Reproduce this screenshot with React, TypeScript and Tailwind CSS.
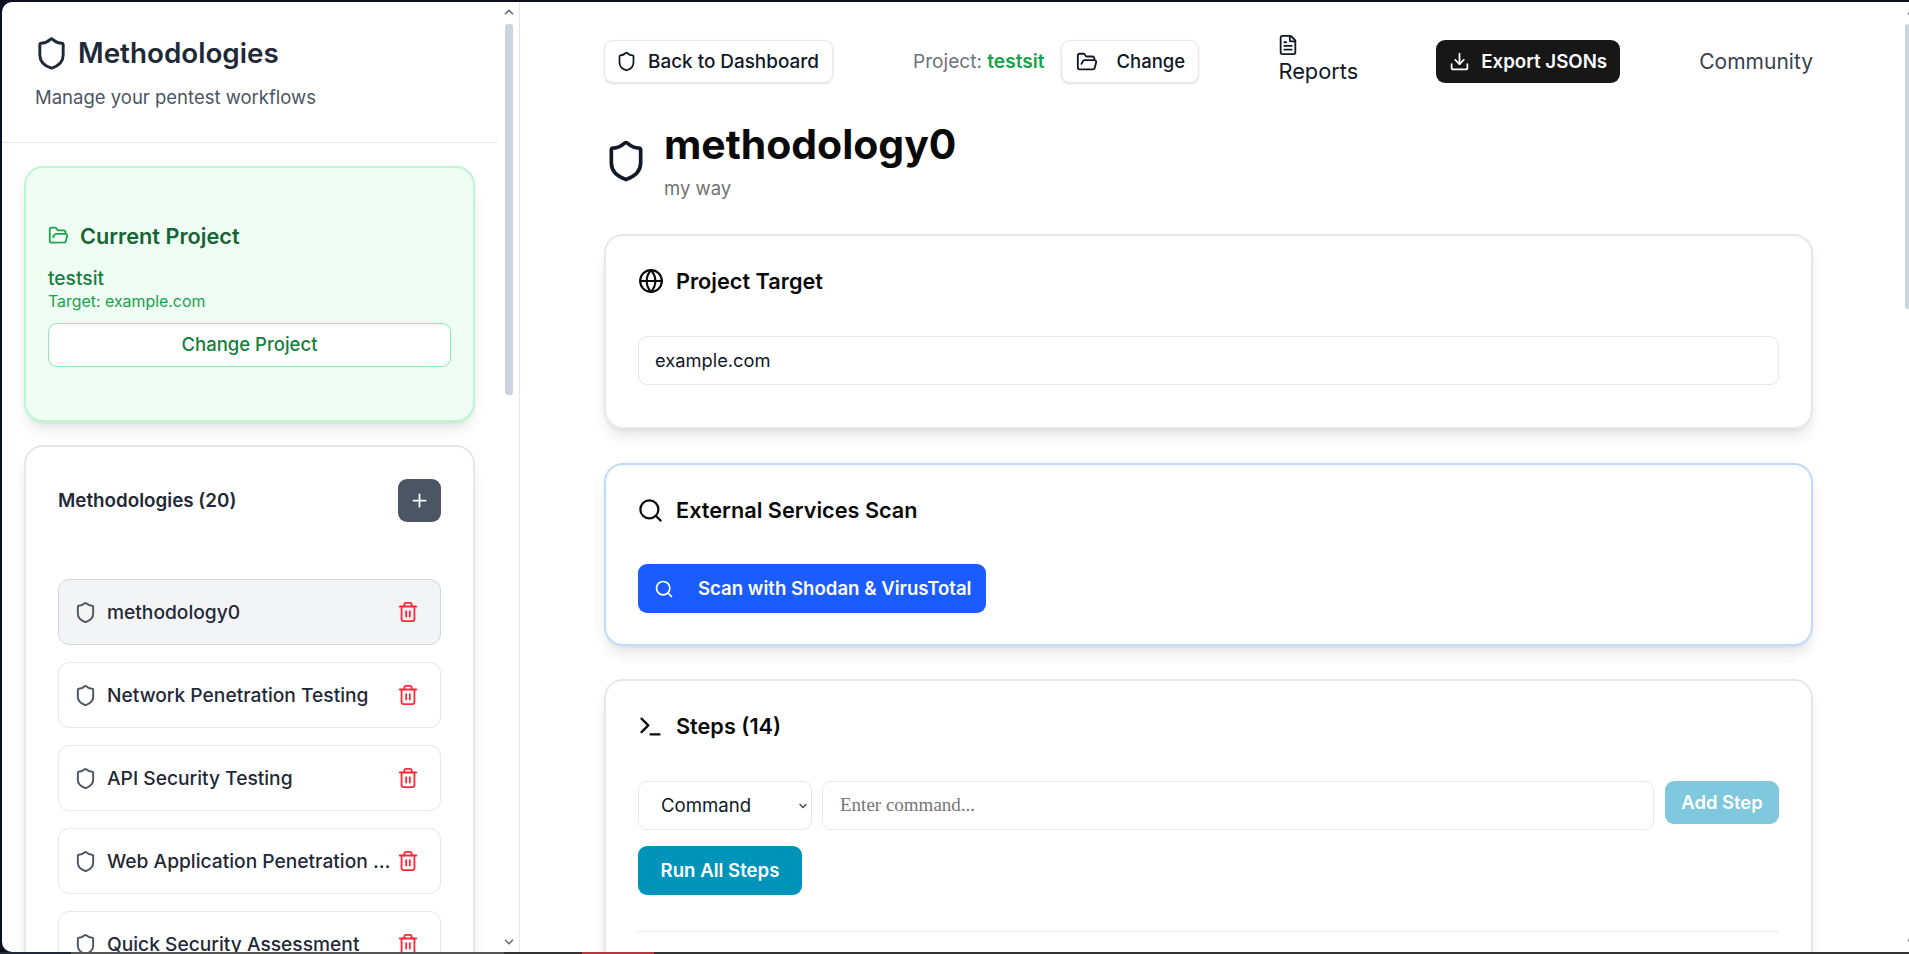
import React from 'react';
import { Shield, FolderOpen, FileText, Download, Globe, Search, Terminal, Plus, Trash2, ChevronUp, ChevronDown } from 'lucide-react';

const methodologies = [
  { name: 'methodology0', active: true },
  { name: 'Network Penetration Testing' },
  { name: 'API Security Testing' },
  { name: 'Web Application Penetration Testing' },
  { name: 'Quick Security Assessment' },
];

const MethodologyRow = ({ name, active }: { name: string; active?: boolean }) => (
  <div
    className={`flex h-[66px] shrink-0 items-center rounded-[11px] border pl-[15px] pr-[21px] ${
      active ? 'border-[#d1d5db] bg-[#f3f4f6]' : 'border-[#e5e7eb] bg-white'
    }`}
  >
    <Shield className="h-[23px] w-[23px] shrink-0 text-[#4b5563]" strokeWidth={2} />
    <span className="ml-[10px] min-w-0 flex-1 truncate text-[19.2px] font-medium text-[#1f2937]">{name}</span>
    <Trash2 className="ml-[5px] h-[22px] w-[22px] shrink-0 text-[#ff2b3b]" strokeWidth={2} />
  </div>
);

const Card = ({ className, children }: { className: string; children: React.ReactNode }) => (
  <section className={`rounded-[19px] border-2 bg-white px-[32px] pt-[31px] shadow-lg ${className}`}>
    {children}
  </section>
);

const Sidebar = () => (
  <aside className="flex w-[518px] shrink-0 border-r border-[#e5e7eb]">
    <div className="h-full w-[495px] shrink-0 overflow-hidden">
      <header className="h-[141px] border-b border-[#e5e7eb] pl-[32px] pt-[32px]">
        <div className="flex items-center gap-[9px]">
          <Shield className="h-[35px] w-[35px] text-[#1f2937]" strokeWidth={2} />
          <h1 className="text-[27.8px] font-semibold leading-[38px] text-[#1f2937]">Methodologies</h1>
        </div>
        <p className="mt-[13px] pl-[1px] text-[18.5px] leading-[24px] text-[#4b5563]">Manage your pentest workflows</p>
      </header>
      <div className="pl-[22px] pr-[22px] pt-[23px]">
        <div className="flex h-[256px] flex-col justify-center rounded-[19px] border-2 border-[#bbf7d0] bg-[#f0fdf4] px-[22px] shadow-lg">
          <div className="flex items-center gap-[11px]">
            <FolderOpen className="h-[21px] w-[21px] text-[#16a34a]" strokeWidth={2} />
            <h2 className="text-[21.7px] font-semibold leading-[28px] text-[#166534]">Current Project</h2>
          </div>
          <div className="mt-[15px] text-[19.2px] font-medium leading-[26px] text-[#15803d]">testsit</div>
          <div className="text-[15.9px] leading-[22px] text-[#16a34a]">Target: example.com</div>
          <button className="mt-[10px] h-[44px] w-full rounded-[9px] border border-[#86efac] bg-white text-[18.5px] font-medium text-[#15803d]">
            Change Project
          </button>
        </div>
        <div className="mt-[23px] h-[600px] rounded-[19px] border-2 border-[#e5e7eb] bg-white px-[32px] pt-[32px] shadow-lg">
          <div className="flex h-[43px] items-center justify-between">
            <h2 className="pt-[2px] text-[18.8px] font-semibold text-[#1f2937]">Methodologies (20)</h2>
            <button className="flex h-[43px] w-[43px] items-center justify-center rounded-[9px] bg-[#4b5563] text-white">
              <Plus className="h-[21px] w-[21px]" strokeWidth={2} />
            </button>
          </div>
          <div className="mt-[57px] flex flex-col gap-[17px]">
            {methodologies.map((m) => (
              <MethodologyRow key={m.name} name={m.name} active={m.active} />
            ))}
          </div>
        </div>
      </div>
    </div>
    <div className="flex w-[22px] shrink-0 flex-col items-center pl-[1px] text-[#6b7280]">
      <ChevronUp className="mt-[3px] h-[14px] w-[14px]" strokeWidth={3} />
      <div className="mt-[5px] h-[371px] w-[8px] rounded-[3px] bg-[#cbd5e1]" />
      <ChevronDown className="mt-auto mb-[3px] h-[14px] w-[14px]" strokeWidth={3} />
    </div>
  </aside>
);

const Main = () => (
  <main className="flex min-w-0 flex-1">
    <div className="h-full min-w-0 flex-1 overflow-hidden pl-[84px] pr-[92px] pt-[38px]">
      <nav className="flex h-[43px] items-center">
        <button className="flex h-[43px] w-[229px] items-center gap-[11px] rounded-[9px] border border-[#e5e7eb] bg-white pl-[11px] text-[18.9px] font-medium text-[#111827] shadow-sm">
          <Shield className="h-[21px] w-[21px]" strokeWidth={2} />
          <span className="pt-[1px]">Back to Dashboard</span>
        </button>
        <span className="ml-[80px] text-[19.1px] text-[#6b7280]">
          Project: <span className="font-semibold text-[#16a34a]">testsit</span>
        </span>
        <button className="ml-[17px] flex h-[43px] w-[138px] items-center gap-[18px] rounded-[9px] border border-[#e5e7eb] bg-white pl-[14px] text-[18.5px] font-medium text-[#111827] shadow-sm">
          <FolderOpen className="h-[22px] w-[22px]" strokeWidth={2} />
          Change
        </button>
        <div className="ml-[79px] -mt-[2px] flex flex-col items-start text-[21.8px] leading-[31px] text-[#111827]">
          <FileText className="-ml-[1px] h-[22px] w-[22px]" strokeWidth={2} />
          <span>Reports</span>
        </div>
        <button className="ml-[78px] flex h-[43px] w-[184px] items-center gap-[11px] rounded-[9px] bg-[#171717] pl-[13px] text-[18.7px] font-semibold text-white">
          <Download className="h-[21px] w-[21px]" strokeWidth={2} />
          <span className="pt-[1px]">Export JSONs</span>
        </button>
        <span className="ml-auto text-[21px] text-[#374151]">Community</span>
      </nav>
      <div className="mt-[38px] flex items-center gap-[16px]">
        <Shield className="h-[44px] w-[44px] shrink-0 text-[#111827]" strokeWidth={2} />
        <div>
          <h1 className="text-[40.9px] font-bold leading-[46px] text-[#0a0a0a]">methodology0</h1>
          <p className="mt-[9px] text-[18.5px] leading-[24px] text-[#737373]">my way</p>
        </div>
      </div>
      <Card className="mt-[34px] h-[195px] border-[#e5e7eb]">
        <div className="flex items-center gap-[12px]">
          <Globe className="h-[26px] w-[26px] text-[#0a0a0a]" strokeWidth={2} />
          <h2 className="text-[21.7px] font-semibold leading-[28px] text-[#0a0a0a]">Project Target</h2>
        </div>
        <div className="mt-[41px] flex h-[49px] items-center rounded-[9px] border border-[#e5e7eb] px-[16px] text-[18.3px] text-[#111827]">
          example.com
        </div>
      </Card>
      <Card className="mt-[34px] h-[183px] border-[#bfdbfe]">
        <div className="flex items-center gap-[12px]">
          <Search className="-ml-[1px] h-[27px] w-[27px] text-[#0a0a0a]" strokeWidth={2} />
          <h2 className="text-[21.7px] font-semibold leading-[28px] text-[#0a0a0a]">External Services Scan</h2>
        </div>
        <button className="mt-[40px] flex h-[49px] w-[348px] items-center rounded-[9px] bg-[#1a5cff] pl-[16px] text-[18.6px] font-semibold text-white">
          <Search className="h-[20px] w-[20px]" strokeWidth={2} />
          <span className="ml-[24px]">Scan with Shodan &amp; VirusTotal</span>
        </button>
      </Card>
      <Card className="mt-[33px] h-[400px] border-[#e5e7eb]">
        <div className="flex items-center gap-[12px]">
          <Terminal className="-ml-[1px] h-[27px] w-[27px] text-[#0a0a0a]" strokeWidth={2} />
          <h2 className="text-[21.7px] font-semibold leading-[28px] text-[#0a0a0a]">Steps (14)</h2>
        </div>
        <div className="mt-[41px] flex items-start gap-[10px]">
          <div className="flex h-[49px] w-[174px] shrink-0 items-center justify-between rounded-[9px] border border-[#e5e7eb] pl-[22px] pr-[2px] text-[18.6px] text-[#111827]">
            Command
            <ChevronDown className="h-[12px] w-[12px] text-[#4b5563]" strokeWidth={3} />
          </div>
          <div className="flex h-[49px] min-w-0 flex-1 items-center rounded-[9px] border border-[#e5e7eb] px-[17px] font-['Liberation_Serif',serif] text-[19px] text-[#757575]">
            Enter command...
          </div>
          <button className="ml-[1px] h-[43px] w-[114px] shrink-0 rounded-[9px] bg-[#7fc8dd] text-[18.4px] font-semibold text-white">
            Add Step
          </button>
        </div>
        <button className="mt-[16px] h-[49px] w-[164px] rounded-[9px] bg-[#0094bb] text-[18.6px] font-semibold text-white">
          Run All Steps
        </button>
        <div className="mt-[36px] h-px bg-[#e5e7eb]" />
      </Card>
    </div>
    <div className="flex w-[4px] shrink-0 flex-col overflow-hidden text-[#6b7280]">
      <ChevronUp className="mt-[3px] h-[14px] w-[14px] shrink-0" strokeWidth={3} />
      <div className="mt-[5px] h-[285px] w-[8px] shrink-0 rounded-[3px] bg-[#cbd5e1]" />
      <ChevronDown className="mt-auto mb-[3px] h-[14px] w-[14px] shrink-0" strokeWidth={3} />
    </div>
  </main>
);

export default function App() {
  return (
    <div className="flex h-screen w-screen flex-col overflow-hidden bg-[#0b1020] pt-[2px] font-['Inter',sans-serif]">
      <div className="min-h-0 flex-1 pl-[2px]">
        <div className="flex h-full overflow-hidden rounded-bl-[10px] rounded-tl-[10px] bg-white">
          <Sidebar />
          <Main />
        </div>
      </div>
      {/* strip of the desktop showing under the window */}
      <div className="flex h-[2px] shrink-0 bg-[#333333]">
        <div className="w-[71px] bg-[#1f2937]" />
        <div className="w-[433px] bg-[#555555]" />
        <div className="w-[78px]" />
        <div className="w-[72px] bg-[#b33a3a]" />
      </div>
    </div>
  );
}
